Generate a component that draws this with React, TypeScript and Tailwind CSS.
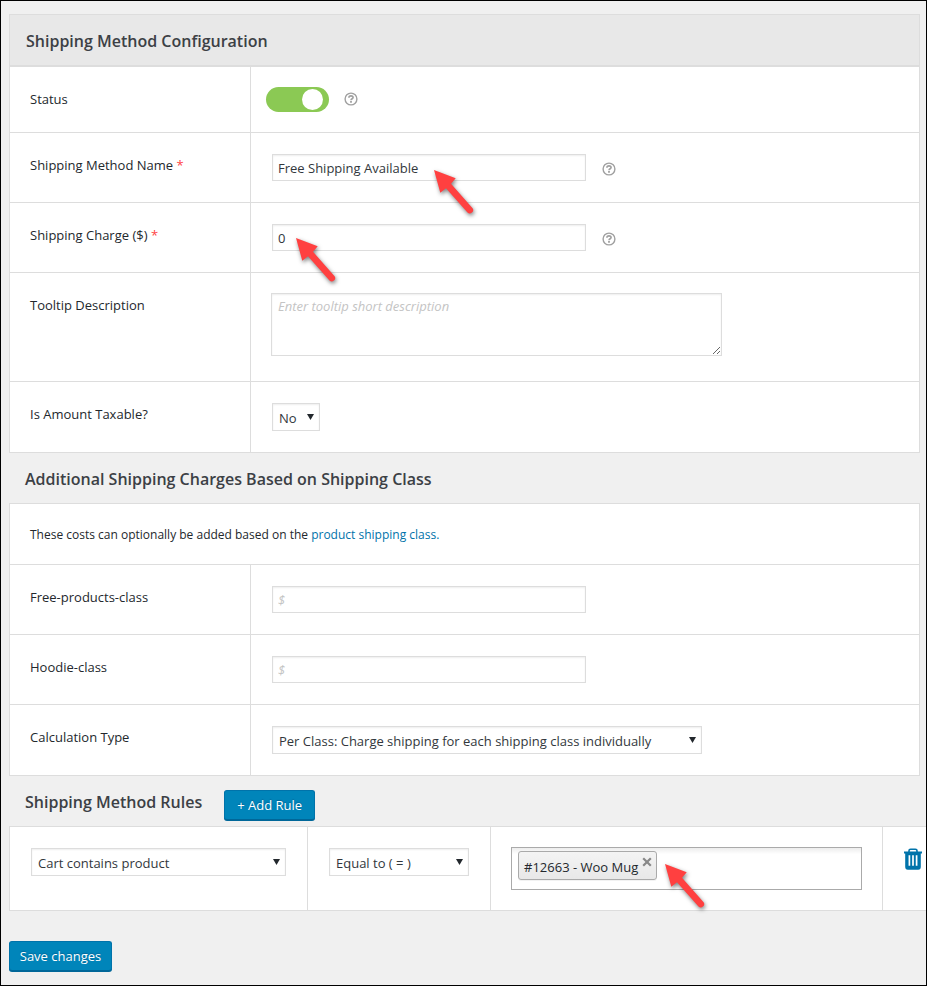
import React, { useState } from 'react';

const controlClass =
  'block max-w-full rounded-none border border-[#ddd] bg-white text-[13px] text-[#32373c] shadow-[inset_0_1px_2px_rgba(0,0,0,0.07)] outline-none placeholder:italic placeholder:text-[#c4c4c4]';

const buttonClass =
  'shrink-0 cursor-pointer rounded-[3px] border border-[#0073aa] border-b-[#006799] bg-[#0085ba] pt-px text-[13px] text-white shadow-[0_1px_0_#006799] [text-shadow:0_-1px_1px_#006799]';

const headingClass = 'text-base font-semibold leading-6 text-[#3c4045]';

const HelpIcon: React.FC<{ className?: string }> = ({ className = 'mt-0.5' }) => (
  <button type="button" aria-label="Help" className={`shrink-0 ${className}`}>
    <svg width="14" height="14" viewBox="0 0 14 14" fill="none" stroke="#a0a0a0" className="block">
      <circle cx="7" cy="7" r="5.9" strokeWidth="1.4" />
      <path d="M4.9 5.7C4.9 4.5 5.7 3.9 7 3.9s2.1.6 2.1 1.7C9.1 6.8 7 6.8 7 8.3" strokeWidth="1.6" />
      <path d="M7 9.1v1.6" strokeWidth="1.8" />
    </svg>
  </button>
);

const PointerArrow: React.FC<{ className: string }> = ({ className }) => (
  <svg
    width="48"
    height="54"
    viewBox="0 0 48 54"
    className={`pointer-events-none absolute z-10 drop-shadow-[1px_2px_2px_rgba(0,0,0,0.5)] ${className}`}
  >
    <path
      d="M0 0 L21.7 8.3 L17 13.7 L38.6 38.2 A3.4 3.4 0 0 1 33.5 42.6 L12 18.3 L6.3 22.7 Z"
      fill="#ff4040"
    />
  </svg>
);

const TrashIcon: React.FC = () => (
  <svg width="20" height="22" viewBox="0 0 20 22" className="block">
    <path d="M6 4V2.8Q6 1.2 7.6 1.2h4.8Q14 1.2 14 2.8V4" fill="none" stroke="#0073aa" strokeWidth="1.6" />
    <path d="M1 3.4h18v2.2h-1.2v13.2q0 3-2.6 3H4.8q-2.6 0-2.6-3V5.6H1z" fill="#0073aa" />
    <path d="M6.4 7.2v10.6M10 7.2v10.6M13.6 7.2v10.6" stroke="#fff" strokeWidth="1.7" />
  </svg>
);

interface SelectProps {
  id: string;
  label?: string;
  options: string[];
  className: string;
}

const Select: React.FC<SelectProps> = ({ id, label, options, className }) => (
  <div className={`relative max-w-full ${className}`}>
    <select id={id} aria-label={label} className={`${controlClass} h-7 w-full appearance-none pl-1.5 pr-5 pt-[3px]`}>
      {options.map((option) => (
        <option key={option}>{option}</option>
      ))}
    </select>
    <svg width="7" height="6" viewBox="0 0 7 6" className="pointer-events-none absolute right-1.5 top-[11px]">
      <path d="M0 0h7L3.5 6z" fill="#23282d" />
    </svg>
  </div>
);

interface RowProps {
  id: string;
  label: string;
  required?: boolean;
  className?: string;
  children: React.ReactNode;
}

const FormRow: React.FC<RowProps> = ({ id, label, required, className = 'pb-5 pl-[21px] pt-[21px]', children }) => (
  <div className="flex border-b border-[#ddd]">
    <div className="w-[241px] shrink-0 border-r border-[#ddd] px-5 py-[22px]">
      <label htmlFor={id} className="block text-[13px] font-medium leading-5 text-[#23282d]">
        {label} {required && <span className="text-[#f44]">*</span>}
      </label>
    </div>
    <div className={`min-w-0 flex-1 ${className}`}>{children}</div>
  </div>
);

const ClassCharge: React.FC<{ id: string; label: string }> = ({ id, label }) => (
  <FormRow id={id} label={label}>
    <input id={id} type="text" placeholder="$" className={`${controlClass} mb-px h-[27px] w-[314px] px-[5px]`} />
  </FormRow>
);

const App: React.FC = () => {
  const [enabled, setEnabled] = useState(true);
  const [products, setProducts] = useState(['#12663 - Woo Mug']);

  return (
    <form
      onSubmit={(e) => e.preventDefault()}
      className="min-h-screen overflow-hidden border border-black bg-[#f0f0f0] pb-[13px] pl-2 pt-[13px] font-['Open_Sans',sans-serif] text-[#23282d]"
    >
      {/* General configuration */}
      <section className="mr-1.5 border border-b-0 border-[#ddd] bg-white">
        <h2 className={`${headingClass} border-b-2 border-[#ddd] bg-[#e8e8e8] px-4 pb-3 pt-3.5`}>
          Shipping Method Configuration
        </h2>

        <FormRow id="status" label="Status" className="pb-5 pl-[15px] pt-5">
          <div className="flex items-start gap-[15px]">
            <input
              id="status"
              type="checkbox"
              checked={enabled}
              onChange={(e) => setEnabled(e.target.checked)}
              className="h-[25px] w-[63px] cursor-pointer appearance-none rounded-full bg-[#ccc] p-0.5 before:block before:size-[21px] before:rounded-full before:bg-white checked:bg-[#8bc954] checked:pl-9"
            />
            <HelpIcon className="mt-[5px]" />
          </div>
        </FormRow>

        <FormRow id="method-name" label="Shipping Method Name" required>
          <div className="relative mb-px flex items-center gap-4">
            <input
              id="method-name"
              type="text"
              defaultValue="Free Shipping Available"
              className={`${controlClass} h-[27px] w-[314px] px-[5px]`}
            />
            <HelpIcon />
            <PointerArrow className="left-[162px] top-4" />
          </div>
        </FormRow>

        <FormRow id="charge" label="Shipping Charge ($)" required>
          <div className="relative mb-px flex items-center gap-4">
            <input id="charge" type="text" defaultValue="0" className={`${controlClass} h-[27px] w-[314px] px-[5px]`} />
            <HelpIcon />
            <PointerArrow className="left-6 top-3.5" />
          </div>
        </FormRow>

        <FormRow id="tooltip" label="Tooltip Description" className="pb-[25px] pl-5 pt-5">
          <textarea
            id="tooltip"
            placeholder="Enter tooltip short description"
            className={`${controlClass} h-[63px] w-[451px] resize px-1.5 py-0.5 leading-5`}
          />
        </FormRow>

        <FormRow id="taxable" label="Is Amount Taxable?">
          <Select id="taxable" options={['No', 'Yes']} className="mb-px w-12" />
        </FormRow>
      </section>

      {/* Per class charges */}
      <h2 className={`${headingClass} px-4 pb-3 pt-3.5`}>Additional Shipping Charges Based on Shipping Class</h2>
      <section className="mr-1.5 border border-b-0 border-[#ddd] bg-white">
        <p className="border-b border-[#ddd] px-5 pb-[19px] pt-[21px] text-xs leading-5">
          These costs can optionally be added based on the{' '}
          <a href="#shipping-class" className="text-[#0073aa]">
            product shipping class.
          </a>
        </p>
        <ClassCharge id="free-products" label="Free-products-class" />
        <ClassCharge id="hoodie" label="Hoodie-class" />
        <FormRow id="calculation" label="Calculation Type">
          <Select
            id="calculation"
            options={[
              'Per Class: Charge shipping for each shipping class individually',
              'Per Order: Charge shipping for the most expensive shipping class',
            ]}
            className="mb-px w-[430px]"
          />
        </FormRow>
      </section>

      {/* Rules */}
      <div className="flex items-start gap-[22px] pb-[5px] pl-4 pt-3.5">
        <h2 className={headingClass}>Shipping Method Rules</h2>
        <button type="button" className={`${buttonClass} mb-px h-[30px] w-[91px]`}>
          + Add Rule
        </button>
      </div>
      <section className="flex border border-r-0 border-[#ddd] bg-white">
        <div className="w-[298px] border-r border-[#ddd] p-[21px]">
          <Select
            id="condition"
            label="Condition"
            options={['Cart contains product', 'Cart contains category', 'Country']}
            className="w-[255px]"
          />
        </div>
        <div className="w-[183px] border-r border-[#ddd] p-[21px]">
          <Select id="operator" label="Operator" options={['Equal to ( = )', 'Not Equal to ( != )']} className="w-[140px]" />
        </div>
        <div className="min-w-0 flex-1 border-r border-[#ddd] p-5">
          <div className="relative h-[43px] border border-[#aaa] bg-white bg-linear-to-b from-[#eee] from-1% to-white to-15% px-1.5 py-[3px]">
            {products.map((product) => (
              <span
                key={product}
                className="inline-flex h-[29px] items-start rounded-[3px] border border-[#aaa] bg-linear-to-b from-[#f4f4f4] to-[#e8e8e8] pl-[5px] pr-1 text-[13px] leading-[30px] shadow-[0_1px_0_rgba(0,0,0,0.05)]"
              >
                {product}
                <button
                  type="button"
                  aria-label={`Remove ${product}`}
                  onClick={() => setProducts(products.filter((p) => p !== product))}
                  className="ml-1 mt-[5px]"
                >
                  <svg width="10" height="10" viewBox="0 0 10 10" className="block">
                    <path d="M1.2 1.2l7.6 7.6M8.8 1.2L1.2 8.8" stroke="#888" strokeWidth="2.2" />
                  </svg>
                </button>
              </span>
            ))}
            <PointerArrow className="left-[153px] top-4" />
          </div>
        </div>
        <div className="w-[43px] pl-5 pt-[21px]">
          <button type="button" aria-label="Delete rule">
            <TrashIcon />
          </button>
        </div>
      </section>

      <button type="submit" className={`${buttonClass} mt-[30px] block h-[30px] w-[103px]`}>
        Save changes
      </button>
    </form>
  );
};

export default App;
